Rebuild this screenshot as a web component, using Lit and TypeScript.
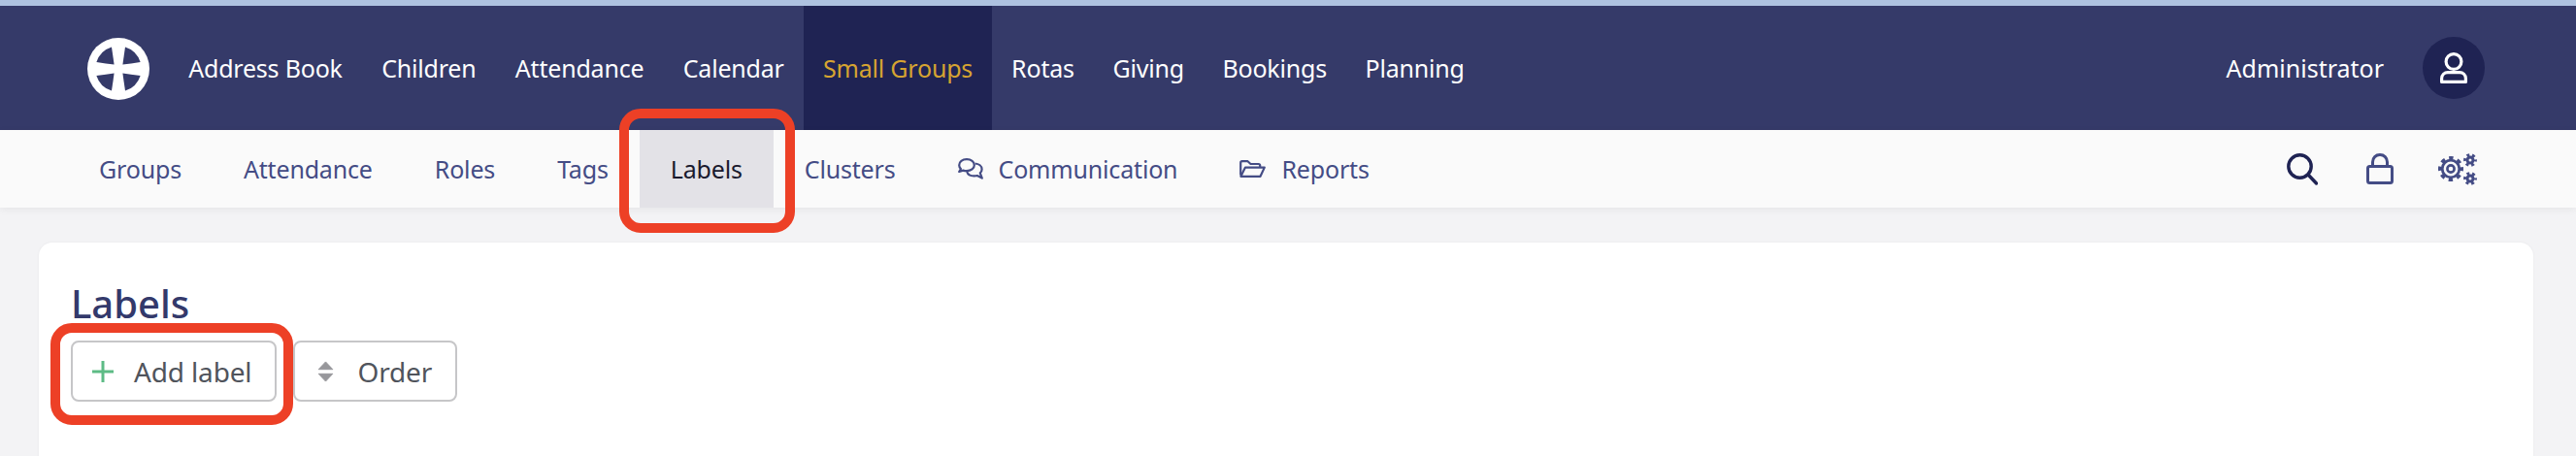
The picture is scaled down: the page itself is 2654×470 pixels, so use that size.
import { LitElement, html, css, svg } from "lit";
import { customElement } from "lit/decorators.js";

const logo = html`<svg class="logo" viewBox="-32 -32 64 64">
  <circle r="32" fill="#fff"></circle>
  ${[0, 90, 180, 270].map(
    (a) => svg`<path transform="rotate(${a})" fill="#353a69" d="M-7 -22.6A23.7 23.7 0 0 0 -22.6 -7Q-12.5 -5.5 -4.4 -4.4Q-5.5 -12.5 -7 -22.6Z"></path>`
  )}
</svg>`;

const gear = (cx: number, cy: number, r: number, sw: number, tr: number, tw: number, hole: number, n: number) => {
  const c = 2 * Math.PI * tr;
  return svg`<circle cx=${cx} cy=${cy} r=${r} fill="none" stroke="currentColor" stroke-width=${sw}></circle>
  <circle cx=${cx} cy=${cy} r=${tr} fill="none" stroke="currentColor" stroke-width=${tw} stroke-dasharray="${c / n / 2} ${c / n / 2}" stroke-dashoffset="${c / n / 4}"></circle>
  ${hole ? svg`<circle cx=${cx} cy=${cy} r=${hole} fill="none" stroke="currentColor" stroke-width="2.6"></circle>` : null}`;
};

const nav = ["Address Book", "Children", "Attendance", "Calendar", "Small Groups", "Rotas", "Giving", "Bookings", "Planning"];

@customElement("app-root")
export class AppRoot extends LitElement {
  static styles = css`
    :host { display: block; height: 470px; overflow: hidden; background: #f3f3f5; font-family: "Noto Sans", "Open Sans", sans-serif; position: relative; }
    .strip { height: 6px; background: #aec2e0; }
    .top { height: 128px; background: #353a69; display: flex; align-items: stretch; padding-left: 90px; padding-right: 94px; color: #fff; font-size: 25px; }
    .logo { width: 64px; height: 64px; align-self: center; margin-right: 20px; margin-top: 1px; }
    .top-item { display: flex; align-items: center; padding: 0 20.2px; letter-spacing: -0.2px; }
    .top-item.on { background: #1f2353; color: #d6a431; }
    .top-item.on ~ .top-item { padding: 0 19.8px; }
    .spacer { flex: 1; }
    .admin { display: flex; align-items: center; gap: 40px; }
    .avatar { width: 64px; height: 64px; border-radius: 50%; background: #1f2353; display: flex; align-items: center; justify-content: center; }
    .avatar svg { width: 28px; height: 32px; }
    .sub { height: 80px; background: #fafafa; box-shadow: 0 2px 8px rgba(0,0,0,.06); display: flex; align-items: stretch; padding-left: 70px; padding-right: 102px; color: #444c85; font-size: 25px; letter-spacing: -0.17px; position: relative; }
    .sub-item { display: flex; align-items: center; padding: 0 32px; gap: 16px; position: relative; }
    .sub-item.on { background: #e3e2e7; color: #1a1a2e; }
    .tools { display: flex; align-items: center; gap: 50px; }
    .tools svg { display: block; }
    .tools .gears { margin-left: -4px; color: #444c85; }
    .ring { position: absolute; box-sizing: border-box; border: 10px solid #ed4026; border-radius: 22px; pointer-events: none; }
    .ring.tab { left: -21px; right: -22px; top: -22px; bottom: -26px; }
    .ring.btn { left: -23px; right: -19px; top: -20px; bottom: -26px; }
    main { padding: 36px 44px 0 40px; }
    .card { background: #fff; border-radius: 14px; height: 300px; padding: 39px 33px; box-shadow: 0 0 3px rgba(0,0,0,.05); }
    h1 { margin: 0 0 14px; font-size: 40px; line-height: 48px; font-weight: 500; color: #33396b; }
    .btns { display: flex; gap: 17px; }
    .b { position: relative; box-sizing: border-box; height: 63px; border: 2px solid #c6c6c8; border-radius: 8px; background: #fff; display: flex; align-items: center; color: #50545c; font-size: 28px; letter-spacing: -0.15px; padding: 0 24px 0 20px; gap: 21px; }
    .b.order { padding: 0 24px 0 23px; gap: 24px; }
    .plus { width: 22px; height: 22px; display: block; }
    .sort { width: 17px; height: 22px; display: block; }
  `;

  render() {
    return html`
      <div class="strip"></div>
      <div class="top">
        ${logo}
        ${nav.map((n) => html`<div class="top-item ${n === "Small Groups" ? "on" : ""}">${n}</div>`)}
        <div class="spacer"></div>
        <div class="admin">
          <span>Administrator</span>
          <div class="avatar">
            <svg viewBox="0 0 28 32" fill="none" stroke="#fff" stroke-width="3.2">
              <circle cx="14" cy="9.5" r="7.9"></circle>
              <path d="M1.6 30.4V27C1.6 23 4.5 20.6 8 20.6H20C23.5 20.6 26.4 23 26.4 27V30.4Z" stroke-linejoin="round"></path>
            </svg>
          </div>
        </div>
      </div>
      <div class="sub">
        <div class="sub-item">Groups</div>
        <div class="sub-item">Attendance</div>
        <div class="sub-item">Roles</div>
        <div class="sub-item">Tags</div>
        <div class="sub-item on">Labels<div class="ring tab"></div></div>
        <div class="sub-item">Clusters</div>
        <div class="sub-item">
          <svg width="26" height="22" viewBox="0 0 26 22" fill="none" stroke="currentColor" stroke-width="2.2" stroke-linejoin="round">
            <path d="M9 1.2C4.5 1.2 1.2 3.8 1.2 7.2C1.2 8.8 1.9 10 2.9 11L1.2 14L5.3 12.6C6.4 13 7.6 13.2 9 13.2C13.5 13.2 16.8 10.6 16.8 7.2C16.8 3.8 13.5 1.2 9 1.2Z"></path>
            <path d="M17.5 5.5C21.5 5.8 24.6 8.2 24.6 11.4C24.6 13 23.9 14.3 22.8 15.3L24.8 20.6L19.8 18C18.8 18.3 17.8 18.4 16.6 18.4C13 18.4 10 16.6 9.2 14"></path>
          </svg>Communication
        </div>
        <div class="sub-item">
          <svg width="27" height="18" viewBox="0 0 27 18" fill="none" stroke="currentColor" stroke-width="2.2" stroke-linejoin="round">
            <path d="M1.2 15.5V2.8C1.2 1.8 2 1.2 2.8 1.2H8.5L11.5 4H19.5C20.5 4 21.2 4.8 21.2 5.6V7.5"></path>
            <path d="M1.4 16.8L6 7.6H25.8L21.5 16.8Z"></path>
          </svg>Reports
        </div>
        <div class="spacer"></div>
        <div class="tools">
          <svg width="32" height="33" viewBox="0 0 32 33" fill="none" stroke="#1f2353" stroke-width="3.4" stroke-linecap="round">
            <circle cx="13.5" cy="13.5" r="11.7"></circle><path d="M22 22L30.5 31"></path>
          </svg>
          <svg width="28" height="32" viewBox="0 0 28 32" fill="none" stroke="#444c85" stroke-width="3" stroke-linejoin="round">
            <rect x="1.5" y="13.5" width="25" height="17" rx="2"></rect>
            <path d="M6.5 13.5V9C6.5 4.5 9.8 1.5 14 1.5S21.5 4.5 21.5 9V13.5"></path>
          </svg>
          <svg class="gears" width="40" height="33" viewBox="0 0 40 33">
            ${gear(13, 16, 8.8, 2.8, 11.2, 3.6, 3.6, 8)}
            ${gear(33, 7, 3, 3, 5.2, 3.4, 0, 6)}
            ${gear(33, 26, 3, 3, 5.2, 3.4, 0, 6)}
          </svg>
        </div>
      </div>
      <main>
        <div class="card">
          <h1>Labels</h1>
          <div class="btns">
            <div class="b">
              <svg class="plus" viewBox="0 0 22 22"><path d="M11 0V22M0 11H22" stroke="#5dbb85" stroke-width="3"></path></svg>
              Add label
              <div class="ring btn"></div>
            </div>
            <div class="b order">
              <svg class="sort" viewBox="0 0 18 24"><path d="M9 1L17 9.5H1ZM9 23L17 14.5H1Z" fill="#97979b" stroke="#97979b" stroke-linejoin="round"></path></svg>
              Order
            </div>
          </div>
        </div>
      </main>
    `;
  }
}
